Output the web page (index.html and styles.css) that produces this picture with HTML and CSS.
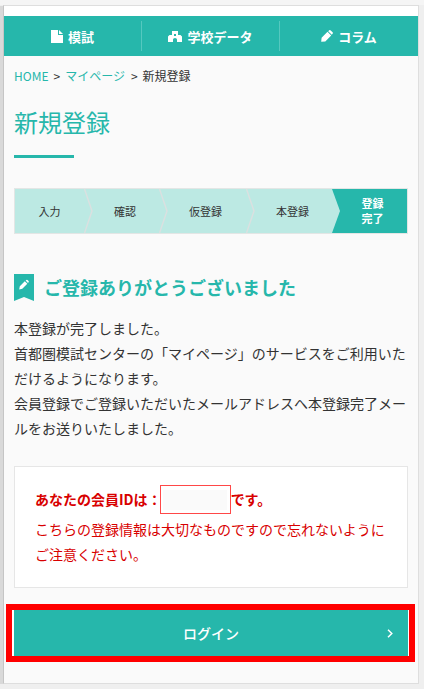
FILE: index.html
```html
<!DOCTYPE html>
<html lang="ja">
<head>
<meta charset="utf-8">
<title>新規登録</title>
<link rel="stylesheet" href="styles.css">
</head>
<body>
<div class="page">
  <nav class="nav">
    <a class="nav-item"><svg class="icon-doc" width="12" height="13" viewBox="0 0 12 13"><path fill="currentColor" d="M0 0h7v5h5v8H0zM8 0l4 4H8z"/></svg>模試</a>
    <a class="nav-item"><svg class="icon-school" width="14" height="11" viewBox="0 0 14 11"><path fill="currentColor" fill-rule="evenodd" d="M4 0h6v4h2.500L14 5.500V11H9V8.500a2 1.500 0 0 0-4 0V11H0V5.500L1.500 4H4zM6 3v2h2V3z"/></svg>学校データ</a>
    <a class="nav-item"><svg class="icon-pencil" width="12" height="12" viewBox="0 0 12 12"><path fill="currentColor" d="M.2 11.800.6 7.700 6.500 1.800l3.700 3.700-5.900 5.900zM7.200 1.200 8.200.3q.8-.6 1.500.1l1.900 1.900q.7.8 0 1.500l-.8.900z"/></svg>コラム</a>
  </nav>
  <main class="content">
    <div class="crumbs"><a>HOME</a><span class="sep">&gt;</span><a class="crumb-mid">マイページ</a><span class="sep">&gt;</span><span>新規登録</span></div>
    <h1 class="title">新規登録</h1>
    <ol class="steps">
      <li class="step step-first">入力<svg class="chevron" viewBox="0 0 9 44"><path d="M.5 0 8 22 .5 44"/></svg></li>
      <li class="step step-confirm">確認<svg class="chevron" viewBox="0 0 9 44"><path d="M.5 0 8 22 .5 44"/></svg></li>
      <li class="step step-temp">仮登録<svg class="chevron" viewBox="0 0 9 44"><path d="M.5 0 8 22 .5 44"/></svg></li>
      <li class="step step-main">本登録<svg class="chevron chevron-last" viewBox="0 0 9 44"><path d="M0 0 8 22 0 44"/></svg></li>
      <li class="step step-current">登録<br>完了</li>
    </ol>
    <h2 class="heading"><svg class="ribbon" width="20" height="27" viewBox="0 0 20 27"><path fill="#26b7ab" d="M0 0h20v27l-10-4-10 4z"/><path fill="#fff" d="m5.200 15.500.6-3.300 5-5 2.500 2.500-5 5zM11.600 6.500l.7-.6q.6-.5 1.200.1l1.100 1.100q.5.600 0 1.200l-.6.600z"/></svg>ご登録ありがとうございました</h2>
    <p class="message">本登録が完了しました。<br>首都圏模試センターの「マイページ」のサービスをご利用いた<br>だけるようになります。<br>会員登録でご登録いただいたメールアドレスへ本登録完了メー<br>ルをお送りいたしました。</p>
    <section class="notice">
      <div class="member">あなたの会員IDは：<span class="member-id"></span>です。</div>
      <p class="caution">こちらの登録情報は大切なものですので忘れないように<br>ご注意ください。</p>
    </section>
    <div class="highlight"><a class="login">ログイン<svg class="arrow" width="6" height="9" viewBox="0 0 6 9"><path d="m1 .7 3.800 3.800L1 8.300"/></svg></a></div>
  </main>
</div>
</body>
</html>
```
FILE: styles.css
```css
* { box-sizing: border-box; }
body {
  margin: 0;
  height: 689px;
  padding-top: 5px;
  overflow: hidden;
  background: linear-gradient(#f5f5f5, #f5f5f5) 0 0 / 100% 5px no-repeat,
    linear-gradient(#d9d9d9, #d9d9d9) 0 6px / 3px 678px no-repeat, #efefef;
  color: #333;
  font-family: "Noto Sans CJK JP", sans-serif;
  font-size: 14px;
}
h1, h2, p, ol { margin: 0; padding: 0; }
.page {
  width: 416px;
  height: 679px;
  margin-left: 3px;
  padding-top: 10px;
  background: linear-gradient(#fff, #fff) 0 0 / 100% 10px no-repeat, #fafafa;
  border: 1px solid #dedede;
  border-left-color: #c5c5c5;
}
.nav {
  display: grid;
  grid-template-columns: 137px 138px 139px;
  height: 40px;
  padding: 5px 0;
  background: #26b7ab;
  color: #fff;
  font-size: 13px;
  font-weight: 700;
}
.nav-item {
  display: flex;
  align-items: center;
  justify-content: center;
  gap: 5px;
}
.nav-item + .nav-item { border-left: 1px solid #55c8bf; }
.content { padding: 0 10px; }
.crumbs { display: flex; height: 18px; margin-top: 11px; font-size: 12px; line-height: 18px; }
.crumbs a { color: #26b7ab; }
.crumb-mid { margin-right: 1px; }
.sep { margin: 0 5px; }
.title {
  height: 73px;
  margin-top: 19px;
  color: #26b7ab;
  font-size: 24px;
  font-weight: 400;
  line-height: 36px;
}
.title::after { content: ""; display: block; width: 60px; height: 3px; margin-top: 15px; background: #26b7ab; }
.steps {
  display: flex;
  height: 46px;
  margin-top: 11px;
  border: 1px solid #e3e6e5;
  background: #bce9e3;
  font-size: 11px;
  line-height: 15px;
  list-style: none;
}
.step { display: flex; align-items: center; justify-content: center; position: relative; }
.step-first { width: 69px; }
.step-confirm { width: 75px; padding-left: 7px; }
.step-temp { width: 87px; padding-left: 6px; }
.step-main { width: 86px; padding-left: 7px; }
.step-current { flex: 1; padding-left: 6px; background: #26b7ab; color: #fff; font-weight: 700; }
.chevron { position: absolute; top: 0; left: 100%; z-index: 1; width: 9px; height: 44px; fill: none; stroke: #dbe0e0; stroke-width: 1.4; }
.chevron-last { fill: #bce9e3; stroke: none; }
.heading {
  display: flex;
  gap: 10px;
  height: 27px;
  margin-top: 40px;
  color: #26b7ab;
  font-size: 18px;
  font-weight: 700;
  line-height: 27px;
}
.message { margin-top: 15px; line-height: 25px; white-space: nowrap; }
.notice {
  height: 122px;
  margin-top: 25px;
  padding: 18px 20px;
  background: #fff;
  border: 1px solid #e6e6e6;
  color: #d80000;
  white-space: nowrap;
}
.member { display: flex; height: 32px; line-height: 28px; font-weight: 700; }
.member-id { width: 71px; height: 29px; margin-left: -2px; background: linear-gradient(#fafafa, #fafafa) center / 64px 20px no-repeat; border: 1px solid #ff4848; }
.caution { line-height: 25px; }
.highlight {
  width: 409px;
  height: 58px;
  margin: 16px -8px 0;
  padding: 0 1px 0 2px;
  border: 6px solid red;
  background: #fff;
}
.login {
  display: flex;
  align-items: center;
  justify-content: center;
  height: 46px;
  position: relative;
  background: #26b7ab;
  color: #fff;
  font-weight: 500;
}
.arrow { position: absolute; top: 19px; right: 15px; fill: none; stroke: currentColor; stroke-width: 1.500; }
```
